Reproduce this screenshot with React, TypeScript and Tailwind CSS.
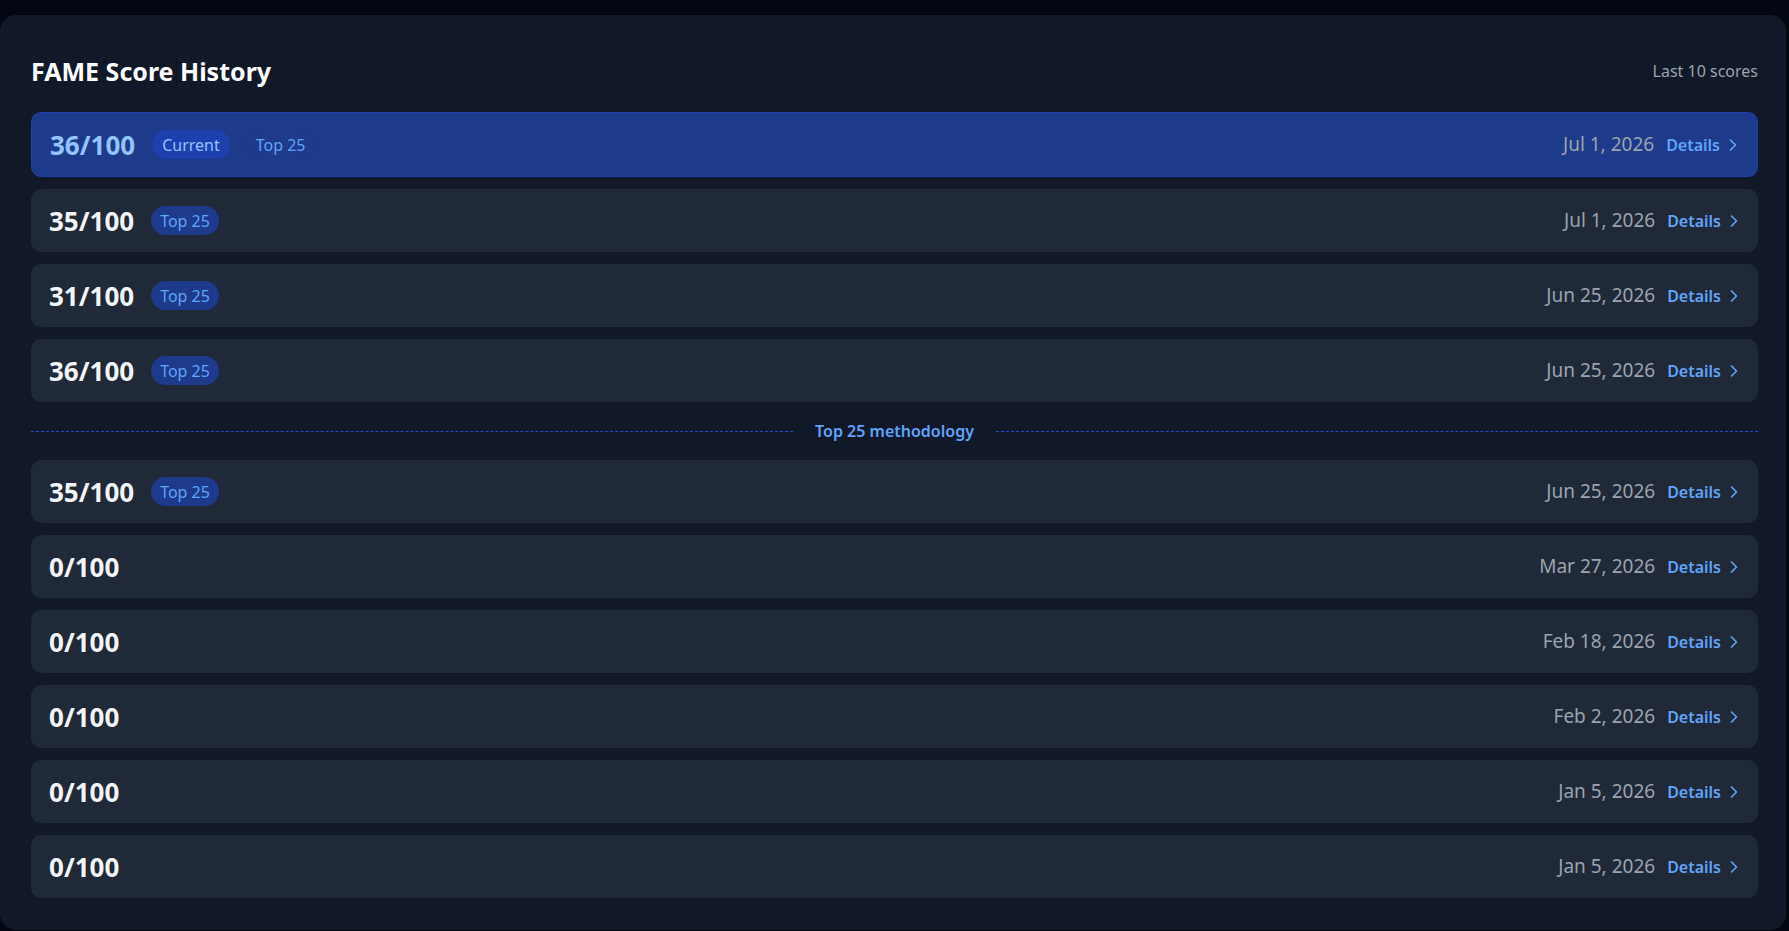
import { ChevronRight } from "lucide-react";

interface ScoreEntry {
  score: number;
  date: string;
  top25: boolean;
  current?: boolean;
}

const recent: ScoreEntry[] = [
  { score: 36, date: "Jul 1, 2026", top25: true, current: true },
  { score: 35, date: "Jul 1, 2026", top25: true },
  { score: 31, date: "Jun 25, 2026", top25: true },
  { score: 36, date: "Jun 25, 2026", top25: true },
];

const older: ScoreEntry[] = [
  { score: 35, date: "Jun 25, 2026", top25: true },
  { score: 0, date: "Mar 27, 2026", top25: false },
  { score: 0, date: "Feb 18, 2026", top25: false },
  { score: 0, date: "Feb 2, 2026", top25: false },
  { score: 0, date: "Jan 5, 2026", top25: false },
  { score: 0, date: "Jan 5, 2026", top25: false },
];

function ScoreRow({ entry }: { entry: ScoreEntry }) {
  const isCurrent = entry.current;
  return (
    <div
      className={`flex items-center justify-between pl-[18px] pr-[14px] rounded-[10px] ${
        isCurrent
          ? "h-[65px] bg-[#1e3a8a] border border-[#1e40af]"
          : "h-[63px] bg-[#1f2937]"
      }`}
    >
      <div className="flex items-center gap-[17px]">
        <span
          className={`text-[26px] font-bold leading-none ${
            isCurrent ? "text-[#93c5fd]" : "text-[#f3f4f6]"
          }`}
        >
          {entry.score}/100
        </span>
        {isCurrent && (
          <span className="h-[29px] px-[10px] flex items-center rounded-full bg-[#1e40af] text-[#93c5fd] text-[16px]">
            Current
          </span>
        )}
        {entry.top25 && (
          <span className="h-[29px] px-[9px] flex items-center rounded-full bg-[#1e3a8a] text-[#60a5fa] text-[16px]">
            Top 25
          </span>
        )}
      </div>
      <div className="flex items-center">
        <span className="text-[19px] text-[#9ca3af]">{entry.date}</span>
        <button className="ml-[12px] flex items-center gap-[3px] text-[16px] font-semibold text-[#60a5fa]">
          Details
          <ChevronRight className="w-5 h-5" strokeWidth={2} />
        </button>
      </div>
    </div>
  );
}

export default function App() {
  return (
    <div
      className="min-h-screen bg-[#030712] pt-[15px] pr-[3px]"
      style={{ fontFamily: '"Noto Sans", "Open Sans", sans-serif' }}
    >
      <div className="bg-[#111827] rounded-2xl pl-[31px] pr-[28px] pt-[38px] pb-[32px]">
        {/* Header */}
        <div className="flex items-center justify-between mb-[23px]">
          <h2 className="text-[25px] font-bold text-white leading-[36px]">
            FAME Score History
          </h2>
          <span className="text-[16px] text-[#9ca3af]">Last 10 scores</span>
        </div>

        {/* Score list */}
        <div className="flex flex-col gap-3">
          {recent.map((entry, i) => (
            <ScoreRow key={`r-${i}`} entry={entry} />
          ))}

          <div className="flex items-center gap-[22px] h-[34px]">
            <div className="flex-1 border-t border-dashed border-[#1d4ed8]" />
            <span className="text-[16px] font-semibold text-[#60a5fa]">
              Top 25 methodology
            </span>
            <div className="flex-1 border-t border-dashed border-[#1d4ed8]" />
          </div>

          {older.map((entry, i) => (
            <ScoreRow key={`o-${i}`} entry={entry} />
          ))}
        </div>
      </div>
    </div>
  );
}
